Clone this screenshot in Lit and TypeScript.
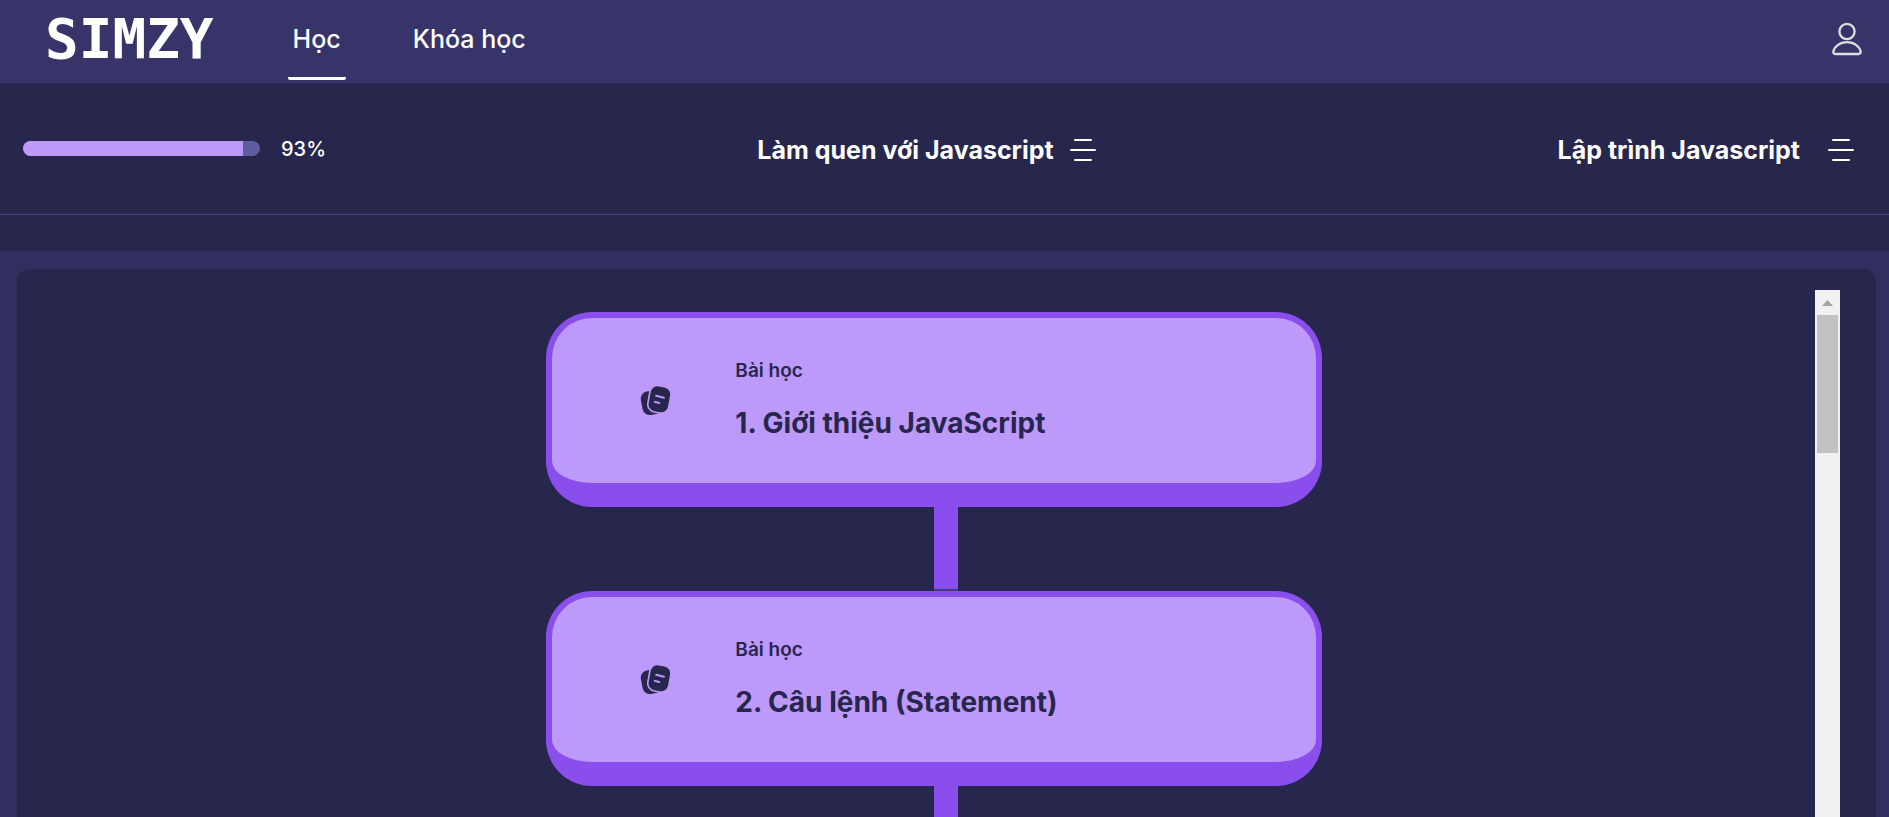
import { LitElement, html, css } from "lit";
import { customElement, property } from "lit/decorators.js";

const menuIcon = html`<svg width="26" height="24" viewBox="0 0 26 24" fill="none" stroke="#fff" stroke-width="2" stroke-linecap="round" aria-hidden="true">
  <path d="M5 2h16M1 12h24M5 22h16" />
</svg>`;

const userIcon = html`<svg width="30" height="34" viewBox="0 0 30 34" fill="none" stroke="#dedede" stroke-width="2.300" stroke-linejoin="round" aria-hidden="true">
  <circle cx="15" cy="9.500" r="7.600" />
  <path d="M3.200 32h23.600c1.300 0 2-1 1.900-2.100C28 24.600 22.300 20.200 15 20.200S2 24.600 1.300 29.900C1.200 31 1.900 32 3.200 32z" />
</svg>`;

@customElement("lesson-card")
class LessonCard extends LitElement {
  @property() kind = "";
  @property() heading = "";

  static styles = css`
    :host {
      display: block;
    }
    .card {
      display: flex;
      align-items: center;
      box-sizing: border-box;
      height: 195px;
      padding: 0 48px 0 88px;
      gap: 64px;
      border: 6px solid #8a4eec;
      border-bottom-width: 24px;
      border-radius: 46px;
      background: #bd99fa;
      color: #27264c;
      text-decoration: none;
    }
    .icon {
      flex: none;
      display: block;
    }
    .text {
      display: flex;
      flex-direction: column;
      gap: 20px;
    }
    .kind {
      font-size: 19px;
      line-height: 24px;
      font-weight: 600;
    }
    .heading {
      margin: 0;
      font-size: 28px;
      line-height: 40px;
      font-weight: 700;
    }
  `;

  render() {
    return html`<a class="card" href="#">
      <svg class="icon" width="31" height="31" viewBox="0 0 30 30" aria-hidden="true">
        <rect x="1.600" y="5.500" width="20" height="23" rx="7" fill="#27264c" transform="rotate(-11 12 17.500)" />
        <rect x="8.500" y="0.800" width="20.600" height="26" rx="7.500" fill="#27264c" stroke="#bd99fa" stroke-width="1.600" transform="rotate(10 18.500 13.500)" />
        <path d="M15.600 10.400l7.600 1.900M14.200 16.300l4.400 1.100" stroke="#bd99fa" stroke-width="1.900" stroke-linecap="round" />
      </svg>
      <div class="text">
        <span class="kind">${this.kind}</span>
        <h2 class="heading">${this.heading}</h2>
      </div>
    </a>`;
  }
}

@customElement("app-root")
class AppRoot extends LitElement {
  @property({ type: Number }) progress = 93;

  private lessons = [
    { kind: "Bài học", heading: "1. Giới thiệu JavaScript" },
    { kind: "Bài học", heading: "2. Câu lệnh (Statement)" },
  ];

  static styles = css`
    :host {
      display: flex;
      flex-direction: column;
      height: 100vh;
      overflow: hidden;
      background: #302f60;
      color: #fff;
      font-family: Inter, "Noto Sans", sans-serif;
    }
    button {
      display: flex;
      padding: 0;
      border: 0;
      background: none;
      font: inherit;
      color: inherit;
      cursor: pointer;
    }
    .topbar {
      flex: none;
      display: flex;
      align-items: stretch;
      height: 83px;
      padding: 0 27px 0 45px;
      background: #37346a;
    }
    .logo {
      align-self: center;
      padding-bottom: 6px;
      margin-right: 74px;
      color: #fff;
      font: bold 56px/64px "DejaVu Sans Mono", monospace;
      text-decoration: none;
    }
    .nav {
      flex: 1;
      display: flex;
      gap: 62px;
    }
    .link {
      display: flex;
      align-items: center;
      box-sizing: border-box;
      margin-bottom: 3px;
      padding: 0 5px;
      border-bottom: 3px solid transparent;
      border-radius: 2px;
      color: #fff;
      font-size: 25px;
      font-weight: 500;
      text-decoration: none;
    }
    .link.active {
      border-bottom-color: #fff;
    }
    .user {
      align-self: center;
      padding-bottom: 5px;
    }
    .course {
      flex: none;
      display: grid;
      grid-template-columns: 1fr auto 1fr;
      align-items: center;
      height: 131px;
      padding: 0 35px 0 23px;
      border-bottom: 1px solid #443f7c;
      background: #27264c;
    }
    .progress {
      display: flex;
      align-items: center;
      gap: 21px;
      font-size: 20px;
      font-weight: 500;
    }
    .track {
      width: 237px;
      height: 15px;
      border-radius: 8px;
      overflow: hidden;
      background: #5f5c9f;
    }
    .fill {
      height: 100%;
      background: #bd99fa;
    }
    .chapter,
    .subject {
      display: flex;
      align-items: center;
      gap: 16px;
      padding-top: 2px;
      font-size: 25px;
      line-height: 32px;
      font-weight: 700;
      white-space: nowrap;
    }
    .chapter {
      padding-right: 24px;
    }
    .subject {
      justify-self: end;
      gap: 28px;
    }
    .title {
      margin: 0;
      font: inherit;
    }
    .strip {
      flex: none;
      height: 36px;
      background: #27264c;
    }
    .panel {
      flex: 1;
      min-height: 0;
      display: flex;
      margin: 18px 13px 0 17px;
      padding: 21px 36px 0;
      border-radius: 12px 12px 0 0;
      background: #27264c;
    }
    .list {
      flex: 1;
      overflow: hidden;
      display: flex;
      flex-direction: column;
      align-items: center;
      padding-top: 22px;
    }
    .step {
      flex: none;
      width: 44%;
    }
    .connector {
      box-sizing: border-box;
      width: 24px;
      height: 84px;
      margin-left: 50%;
      border-bottom: 2px solid #443f7c;
      background: #8a4eec;
    }
    .scrollbar {
      flex: none;
      width: 25px;
      display: flex;
      flex-direction: column;
      align-items: center;
      background: #f1f1f1;
    }
    .up {
      width: 25px;
      height: 25px;
      align-items: center;
      justify-content: center;
    }
    .thumb {
      width: 21px;
      height: 138px;
      background: #c1c1c1;
    }
  `;

  render() {
    return html`
      <header class="topbar">
        <a class="logo" href="#">SIMZY</a>
        <nav class="nav">
          <a class="link active" href="#" aria-current="page">Học</a>
          <a class="link" href="#">Khóa học</a>
        </nav>
        <button class="user" aria-label="Tài khoản">${userIcon}</button>
      </header>
      <section class="course">
        <div class="progress">
          <div class="track" role="progressbar" aria-label="93%" aria-valuenow=${this.progress} aria-valuemin="0" aria-valuemax="100">
            <div class="fill" style="width: ${this.progress}%"></div>
          </div>
          <span>${this.progress}%</span>
        </div>
        <div class="chapter">
          <h1 class="title">Làm quen với Javascript</h1>
          <button aria-label="Danh sách bài học">${menuIcon}</button>
        </div>
        <div class="subject">
          <span class="title">Lập trình Javascript</span>
          <button aria-label="Danh sách chương">${menuIcon}</button>
        </div>
      </section>
      <div class="strip"></div>
      <main class="panel">
        <div class="list">
          ${this.lessons.map(
            (l) => html`<div class="step">
              <lesson-card .kind=${l.kind} .heading=${l.heading}></lesson-card>
              <div class="connector"></div>
            </div>`
          )}
        </div>
        <div class="scrollbar">
          <button class="up" aria-label="Cuộn lên">
            <svg width="11" height="6" viewBox="0 0 11 6" aria-hidden="true"><path d="M5.500 0L11 6H0z" fill="#a3a3a3" /></svg>
          </button>
          <div class="thumb"></div>
        </div>
      </main>
    `;
  }
}
